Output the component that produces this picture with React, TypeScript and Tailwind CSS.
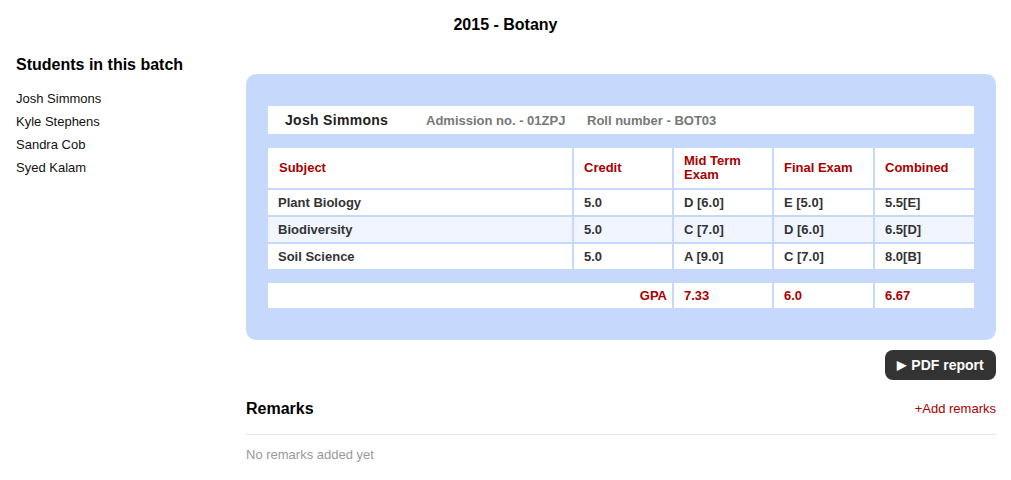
const students = ["Josh Simmons", "Kyle Stephens", "Sandra Cob", "Syed Kalam"];

const rows = [
  { subject: "Plant Biology", credit: "5.0", mid: "D [6.0]", final: "E [5.0]", combined: "5.5[E]" },
  { subject: "Biodiversity", credit: "5.0", mid: "C [7.0]", final: "D [6.0]", combined: "6.5[D]" },
  { subject: "Soil Science", credit: "5.0", mid: "A [9.0]", final: "C [7.0]", combined: "8.0[B]" },
];

export default function App() {
  return (
    <main className="bg-white min-h-[480px] text-[13px] text-[#222] font-['Liberation_Sans',Arial,sans-serif]">
      {/* Title */}
      <div className="h-[50px] flex items-center justify-center">
        <h1 className="text-[16px] font-bold text-black">2015 - Botany</h1>
      </div>

      <div className="flex">
        {/* Sidebar */}
        <aside className="w-[246px] shrink-0 pl-4">
          <h2 className="mt-[5px] text-[16px] leading-5 font-bold text-black">Students in this batch</h2>
          <ul className="mt-[12px]">
            {students.map((s) => (
              <li key={s} className="leading-[23px] text-[#111]">{s}</li>
            ))}
          </ul>
        </aside>

        {/* Report */}
        <section className="flex-1 pr-[15px]">
          <div className="mt-[24px] rounded-[10px] bg-[#c6d9fd] px-[22px] pt-[32px] pb-[32px]">
            <div className="h-[28px] bg-white flex items-center pl-[17px] pt-[1px] font-bold">
              <span className="text-[14px] text-[#222] tracking-[0.3px] w-[141px]">Josh Simmons</span>
              <span className="text-[#777] w-[161px]">Admission no. - 01ZPJ</span>
              <span className="text-[#777]">Roll number - BOT03</span>
            </div>

            <div className="mt-[14px] grid grid-cols-[304px_98px_98px_99px_99px] gap-[2px] font-bold">
              <div className="h-[40px] bg-white text-[#aa0000] flex items-center pl-[11px]">Subject</div>
              <div className="bg-white text-[#aa0000] flex items-center pl-[10px]">Credit</div>
              <div className="bg-white text-[#aa0000] flex items-center pl-[10px] leading-[14px]">Mid Term<br />Exam</div>
              <div className="bg-white text-[#aa0000] flex items-center pl-[10px]">Final Exam</div>
              <div className="bg-white text-[#aa0000] flex items-center pl-[10px]">Combined</div>
              {rows.map((r, i) => {
                const bg = i === 1 ? "bg-[#f0f5ff]" : "bg-white";
                return [r.subject, r.credit, r.mid, r.final, r.combined].map((v, j) => (
                  <div key={`${i}-${j}`} className={`${bg} h-[25px] flex items-center pl-[10px] text-[#333]`}>
                    {v}
                  </div>
                ));
              })}
            </div>

            <div className="mt-[14px] grid grid-cols-[304px_98px_98px_99px_99px] gap-[2px] font-bold text-[#aa0000]">
              <div className="col-span-2 h-[25px] bg-white flex items-center justify-end pr-[5px]">GPA</div>
              <div className="bg-white flex items-center pl-[10px]">7.33</div>
              <div className="bg-white flex items-center pl-[10px]">6.0</div>
              <div className="bg-white flex items-center pl-[10px]">6.67</div>
            </div>
          </div>

          <div className="mt-[10px] flex justify-end">
            <button className="h-[30px] w-[111px] rounded-[8px] bg-[#333] text-white text-[14px] font-bold flex items-center justify-center gap-[5px]">
              <span className="text-[12px]">▶</span>
              <span>PDF report</span>
            </button>
          </div>

          <div className="mt-[19px] flex items-center justify-between h-[20px]">
            <h3 className="text-[16px] font-bold text-black">Remarks</h3>
            <a href="#" className="text-[#aa0000]">+Add remarks</a>
          </div>
          <div className="mt-[15px] border-t border-[#e5e5e5]"></div>
          <p className="mt-[10px] text-[#999]">No remarks added yet</p>
        </section>
      </div>
    </main>
  );
}
